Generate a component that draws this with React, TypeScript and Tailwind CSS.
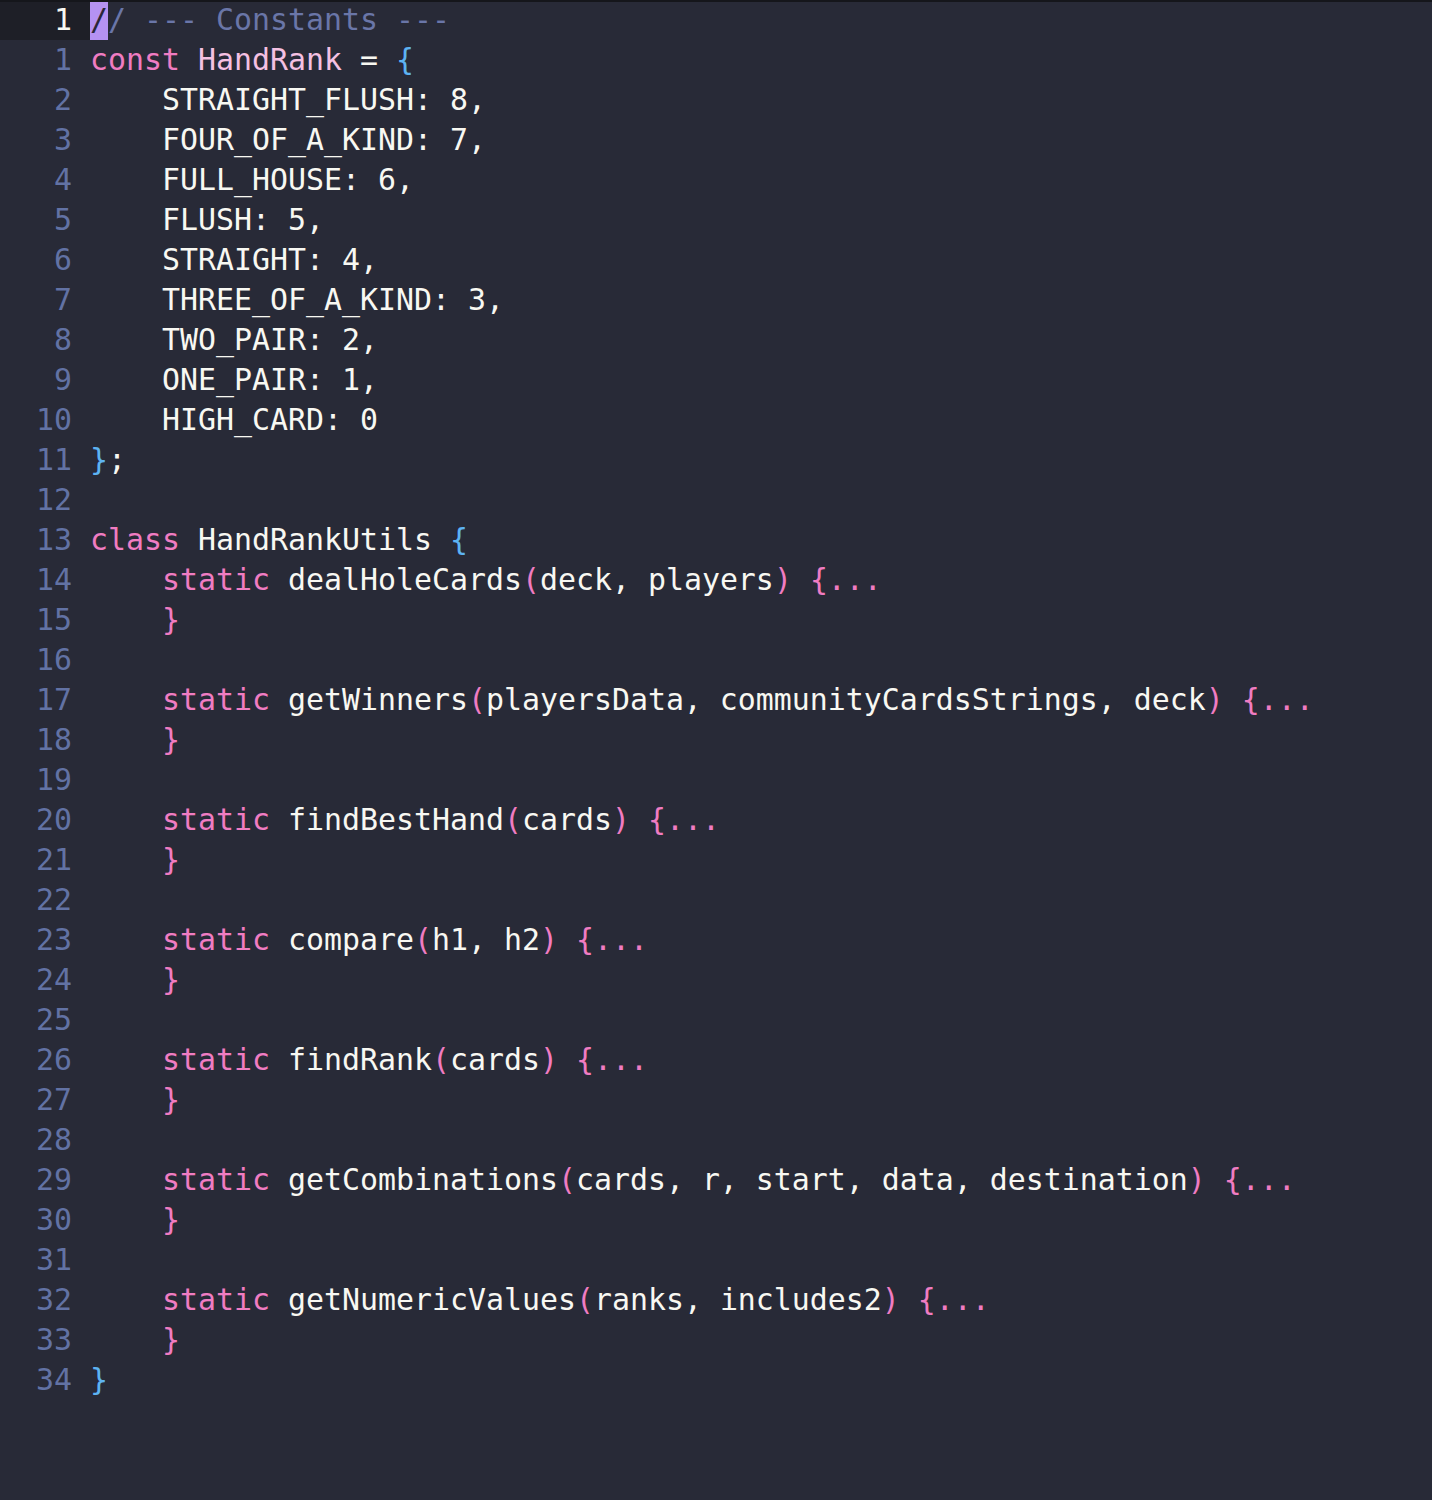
import React from "react";

type Tok = [string, string];

const W = "text-[#f8f8f2]";
const K = "text-[#f07cc2]";
const C = "text-[#f5c0e2]";
const B = "text-[#5db3f2]";
const CM = "text-[#6a76a8]";

const lines: Tok[][] = [
  [["const", K], [" ", W], ["HandRank", C], [" = ", W], ["{", B]],
  [["    STRAIGHT_FLUSH: 8,", W]],
  [["    FOUR_OF_A_KIND: 7,", W]],
  [["    FULL_HOUSE: 6,", W]],
  [["    FLUSH: 5,", W]],
  [["    STRAIGHT: 4,", W]],
  [["    THREE_OF_A_KIND: 3,", W]],
  [["    TWO_PAIR: 2,", W]],
  [["    ONE_PAIR: 1,", W]],
  [["    HIGH_CARD: 0", W]],
  [["}", B], [";", W]],
  [],
  [["class", K], [" HandRankUtils ", W], ["{", B]],
  ...method("dealHoleCards", "deck, players"),
  [],
  ...method("getWinners", "playersData, communityCardsStrings, deck"),
  [],
  ...method("findBestHand", "cards"),
  [],
  ...method("compare", "h1, h2"),
  [],
  ...method("findRank", "cards"),
  [],
  ...method("getCombinations", "cards, r, start, data, destination"),
  [],
  ...method("getNumericValues", "ranks, includes2"),
  [["}", B]],
];

function method(name: string, args: string): Tok[][] {
  return [
    [
      ["    ", W],
      ["static", K],
      [" " + name, W],
      ["(", K],
      [args, W],
      [")", K],
      [" ", W],
      ["{...", K],
    ],
    [["    ", W], ["}", K]],
  ];
}

export default function App() {
  return (
    <div
      className="w-[1432px] h-[1500px] bg-[#282a37] border-t-2 border-[#15161b] overflow-hidden"
      style={{ fontFamily: '"DejaVu Sans Mono", "Liberation Mono", monospace' }}
    >
      <div className="-mt-[2px]">
        <div className="flex h-[40px] leading-[40px] text-[29.9px] whitespace-pre">
          <div className="w-[90px] pr-[18px] text-right bg-[#1e1f27] text-[#f8f8f2]">1</div>
          <div className="flex">
            <span className="w-[18px] bg-[#b592f2] text-[#2a2638] inline-block">/</span>
            <span className={CM}>/ --- Constants ---</span>
          </div>
        </div>
        {lines.map((toks, i) => (
          <div key={i} className="flex h-[40px] leading-[40px] text-[29.9px] whitespace-pre">
            <div className="w-[90px] pr-[18px] text-right text-[#6272a4]">{i + 1}</div>
            <div>
              {toks.map(([t, c], j) => (
                <span key={j} className={c}>
                  {t}
                </span>
              ))}
            </div>
          </div>
        ))}
      </div>
    </div>
  );
}
